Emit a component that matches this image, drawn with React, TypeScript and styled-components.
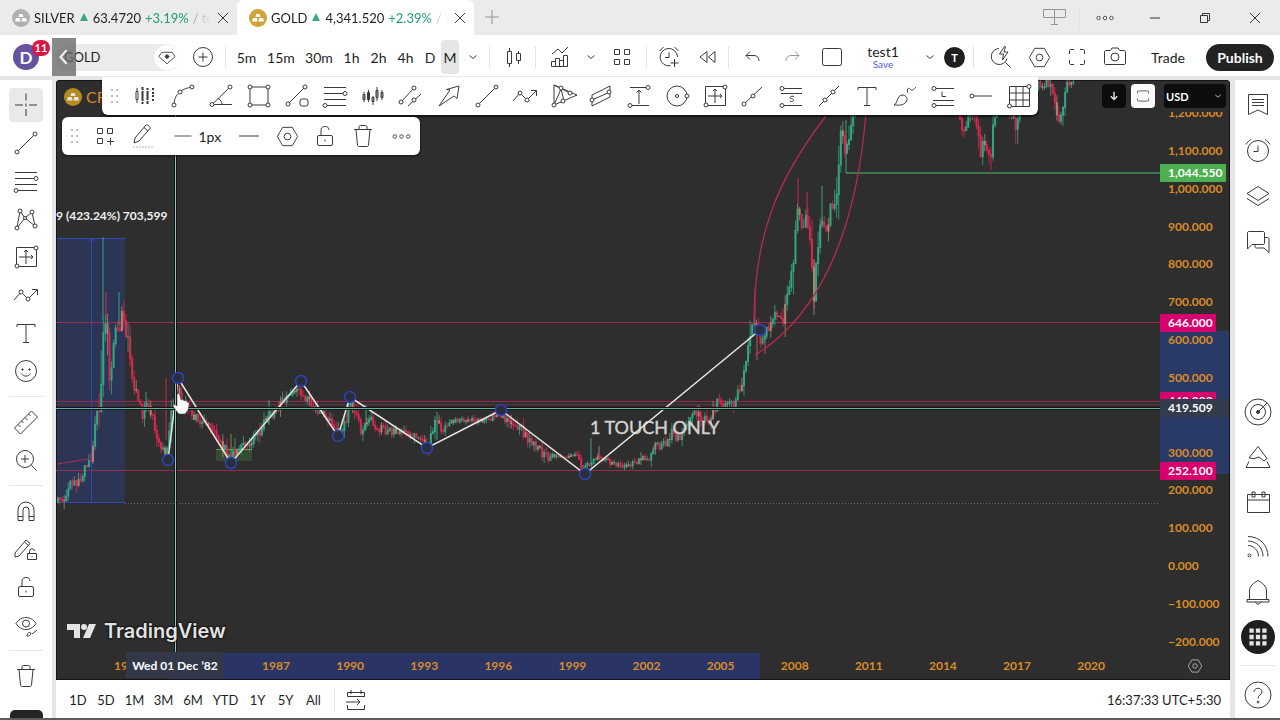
import React from "react";
import styled, { createGlobalStyle, css } from "styled-components";

const Global = createGlobalStyle`
  *, *::before, *::after { box-sizing: border-box; }
  body { margin: 0; background: #fff; color: #1f1f1f; font-family: Lato, "Noto Sans", sans-serif; font-size: 14px; }
  button, input, select { font: inherit; color: inherit; }
  button { background: none; border: 0; padding: 0; cursor: pointer; }
`;

/* ---------- layout ---------- */

const Page = styled.div`
  height: 100vh;
  display: flex;
  flex-direction: column;
  background: #e6e6e6;
  border-bottom: 2px solid #5c5c5c;
  overflow: hidden;
`;

const Workspace = styled.div`
  flex: 1;
  min-height: 0;
  display: grid;
  grid-template-columns: 52px minmax(0, 1fr) 45px;
  column-gap: 4px;
  margin-top: 4px;
`;

const Center = styled.main`
  position: relative;
  display: flex;
  flex-direction: column;
  min-height: 0;
`;

const Sep = styled.span<{ $gap?: number }>`
  flex: none;
  width: 1px;
  height: 22px;
  margin: 0 ${(p) => p.$gap ?? 2}px;
  background: #e4e4e4;
`;

const Cell = styled.button<{ $w: number; $active?: boolean; $dim?: boolean }>`
  flex: none;
  width: ${(p) => p.$w}px;
  height: 34px;
  display: flex;
  align-items: center;
  justify-content: center;
  border-radius: 4px;
  color: ${(p) => (p.$dim ? "#8a8a8a" : "#1f1f1f")};
  background: ${(p) => (p.$active ? "#e6e6e6" : "transparent")};
`;

const Glyph = styled.svg`
  flex: none;
  display: block;
  opacity: 0.88;
`;

/* ---------- title bar ---------- */

const TitleBar = styled.header`
  flex: none;
  height: 35px;
  display: flex;
  background: #ebebeb;
`;

const Tab = styled.div<{ $active?: boolean }>`
  width: 237px;
  display: flex;
  align-items: center;
  gap: 4px;
  padding: 0 6px 0 12px;
  border-radius: 6px 6px 0 0;
  white-space: nowrap;
  background: ${(p) => (p.$active ? "#fff" : "transparent")};
`;

const TabText = styled.div`
  flex: 1;
  min-width: 0;
  display: flex;
  gap: 4px;
  align-items: center;
  font-size: 13px;
  overflow: hidden;
  mask-image: linear-gradient(to right, #000 88%, transparent);
`;

const Up = styled.span`
  color: #1f9d76;
`;

const Faint = styled.span`
  color: #8f8f8f;
`;

const WindowControls = styled.div`
  margin-left: auto;
  display: flex;
  align-items: center;
`;

/* ---------- top toolbar ---------- */

const TopBar = styled.div`
  position: relative;
  flex: none;
  height: 41px;
  padding-top: 3px;
  display: flex;
  align-items: center;
  justify-content: space-between;
  background: #fff;
`;

const Group = styled.div`
  display: flex;
  align-items: center;
`;

const Avatar = styled.button`
  position: relative;
  width: 26px;
  height: 26px;
  margin: 0 16px 0 13px;
  border-radius: 50%;
  background: #6553a0;
  color: #fff;
  font-size: 17px;
  font-weight: 700;
`;

const Badge = styled.span`
  position: absolute;
  top: -4px;
  right: -11px;
  width: 18px;
  height: 16px;
  border-radius: 8px;
  background: #dc1440;
  font-size: 11px;
  line-height: 16px;
`;

const Search = styled.label`
  width: 125px;
  height: 27px;
  display: flex;
  align-items: center;
  padding-left: 9px;
  border-radius: 14px;
  background: #ebebeb;
  margin-right: 6px;
`;

const SearchInput = styled.input`
  flex: 1;
  min-width: 0;
  border: 0;
  padding: 0;
  outline: 0;
  background: none;
  font-size: 13px;
`;

const SearchMark = styled.span`
  width: 26px;
  height: 25px;
  display: flex;
  align-items: center;
  justify-content: center;
  border-radius: 50%;
  background: #fff;
`;

const BackHandle = styled.button`
  position: absolute;
  left: 52px;
  top: 3px;
  width: 24px;
  height: 38px;
  background: #6a6a6acc;
  color: #fff;
`;

const LayoutName = styled.button`
  width: 66px;
  display: flex;
  flex-direction: column;
  align-items: center;
  font-size: 14px;
  line-height: 15px;
`;

const Save = styled.span`
  color: #4c5ce0;
  font-size: 10px;
  line-height: 11px;
`;

const TeamMark = styled.button`
  width: 21px;
  height: 21px;
  border-radius: 50%;
  background: #1f1f1f;
  color: #fff;
  font-size: 11px;
  font-weight: 700;
`;

const Trade = styled.button`
  width: 68px;
  height: 28px;
  margin-right: 4px;
  border-radius: 14px;
  font-size: 14px;
`;

const Publish = styled.button`
  width: 68px;
  height: 27px;
  margin-right: 6px;
  border-radius: 14px;
  background: #232323;
  color: #fff;
  font-size: 14px;
  font-weight: 700;
`;

/* ---------- side bars ---------- */

const SideBar = styled.nav<{ $top: number }>`
  min-height: 0;
  padding-top: ${(p) => p.$top}px;
  display: flex;
  flex-direction: column;
  align-items: center;
  background: #fff;
  overflow: hidden;
`;

const SideButton = styled.button<{ $h: number }>`
  flex: none;
  width: 34px;
  height: ${(p) => p.$h}px;
  display: flex;
  align-items: center;
  justify-content: center;
`;

const Chosen = styled.span<{ $on?: boolean }>`
  display: flex;
  padding: 3px;
  border-radius: 4px;
  background: ${(p) => (p.$on ? "#e9e9e9" : "transparent")};
`;

const Rule = styled.hr`
  flex: none;
  width: 34px;
  height: 1px;
  margin: 6px 0;
  border: 0;
  background: #e6e6e6;
`;

const Fill = styled.div`
  flex: 1;
`;

const CornerButton = styled.button`
  flex: none;
  width: 33px;
  height: 34px;
  margin-top: 15px;
  border-radius: 5px;
  background: #232323;
  color: #fff;
`;

const AppsMark = styled.span`
  flex: none;
  width: 34px;
  height: 34px;
  display: grid;
  place-items: center;
  border-radius: 50%;
  background: #1f1f1f;
  color: #fff;
`;

/* ---------- chart ---------- */

const ChartFrame = styled.section`
  flex: 1;
  min-height: 0;
  position: relative;
  display: grid;
  grid-template-columns: minmax(0, 1fr) 70px;
  grid-template-rows: minmax(0, 1fr) 28px;
  margin-right: 1px;
  background: #2e2e2e;
  border-radius: 4px 4px 0 0;
  box-shadow: inset 0 0 0 1px #151515;
  overflow: hidden;
`;

const Canvas = styled.svg`
  display: block;
  width: 100%;
  height: 100%;
  min-height: 0;
  font-family: Lato, "Noto Sans", sans-serif;
`;

const AxisCorner = styled.button`
  display: grid;
  place-items: center;
  color: #fff;
`;

const ChartTitle = styled.div`
  position: absolute;
  left: 8px;
  top: 7px;
  display: flex;
  align-items: center;
  gap: 4px;
  color: #d98a2b;
  font-size: 16px;
`;

const AxisTools = styled.div`
  position: absolute;
  top: 4px;
  right: 4px;
  display: flex;
  gap: 5px;
`;

const AxisButton = styled.button<{ $light?: boolean }>`
  width: 24px;
  height: 24px;
  display: grid;
  place-items: center;
  border-radius: 4px;
  background: ${(p) => (p.$light ? "#fafafa" : "#0c0c0c")};
  color: ${(p) => (p.$light ? "#222" : "#fff")};
`;

const CurrencyBox = styled.div`
  position: relative;
  width: 62px;
  height: 24px;
  margin-left: 4px;
  color: #fff;
`;

const Currency = styled.select`
  width: 100%;
  height: 100%;
  appearance: none;
  border: 0;
  border-radius: 3px;
  padding: 0 2px;
  background: #0c0c0c;
  font-size: 11px;
  font-weight: 700;
`;

const CurrencyArrow = styled.span`
  position: absolute;
  right: -3px;
  top: 1px;
  display: flex;
  pointer-events: none;
`;

const Watermark = styled.div`
  position: absolute;
  left: 11px;
  bottom: 36px;
  display: flex;
  align-items: center;
  gap: 7px;
  color: #e4e4e4;
  font-family: Inter, sans-serif;
  font-size: 20px;
  font-weight: 600;
  line-height: 26px;
  text-shadow: 0 0 2px #000, 0 0 2px #000;
`;

const floating = css`
  position: absolute;
  display: flex;
  align-items: center;
  background: #fff;
`;

const DrawingBar = styled.div`
  ${floating}
  left: 46px;
  top: -3px;
  height: 38px;
  border-radius: 0 0 6px 6px;
  box-shadow: 0 2px 2px #0009;
`;

const StyleBar = styled.div`
  ${floating}
  left: 6px;
  top: 37px;
  height: 38px;
  border-radius: 6px;
  box-shadow: 0 1px 3px #0009;
`;

const Handle = styled.span`
  width: 24px;
  display: flex;
  justify-content: center;
  color: #b5b5b5;
`;

/* ---------- bottom bar ---------- */

const BottomBar = styled.footer`
  flex: none;
  height: 38px;
  margin-right: 1px;
  padding: 2px 9px 0 8px;
  display: flex;
  align-items: center;
  background: #fff;
  font-size: 13px;
`;

const Clock = styled.button`
  margin-left: auto;
  font-size: 13px;
`;

/* ---------- icons ---------- */

const dot = (x: number, y: number, r = 2) => <circle key={`${x}-${y}`} cx={x} cy={y} r={r} fill="#fff" />;

const icons: Record<string, React.ReactNode> = {
  cross: <path d="M14 2.500v7M14 18v7M3 14h8M17 14h8M14 12.500v3" />,
  trend: <><path d="M5 23 23 5" />{dot(5, 23)}{dot(23, 5)}</>,
  fib: <><path d="M3 5.500h22M3 11.500h20M3 17.500h22M5 23.500h20" />{dot(24, 11.5)}{dot(4, 23.5)}</>,
  pattern: <><path d="M5 23 8 6l5 7 7-6 3 14-10-8-8 10" />{dot(8, 6)}{dot(20, 7)}{dot(5, 23)}{dot(23, 21)}{dot(13, 13, 1.5)}</>,
  measureBox: <><path d="M4.500 4.500h20v19h-20zM7 14h14M14 21V7M12 9l2-2 2 2M19 12l2 2-2 2" />{dot(24, 5)}{dot(5, 23)}</>,
  wave: <><path d="m2 19 7-8 7 7L25 9M20 8.500h5.500V14" />{dot(9, 11)}{dot(16, 18)}</>,
  text: <path d="M5 8V5.500h18V8M14 5.500v18M11 23.500h6" />,
  smile: <><circle cx="14" cy="14" r="10.500" /><path d="M9.500 16.500c2 3.500 7 3.500 9 0" /><circle cx="10.500" cy="12.500" r=".7" fill="currentColor" /><circle cx="17.500" cy="12.500" r=".7" fill="currentColor" /></>,
  ruler: <path d="m2.500 20 17-17 6 6-17 17zM6 16.500l2.500 2.500M9.500 13l2 2M13 9.500l2.500 2.500M16.500 6l2 2" />,
  zoom: <><circle cx="13" cy="13" r="8.500" /><path d="m19.500 19.500 5 5M13 9v8M9 13h8" /></>,
  magnet: <path d="M6 23.500V13a8 8 0 0 1 16 0v10.500h-5V13a3 3 0 0 0-6 0v10.500zM6 19.500h5M17 19.500h5" />,
  pencilLock: <><path d="m3 18 11-13 4 3.500L7 21l-4 1zM12.500 7l4 3.500" /><path d="M15.500 18.500h9v6h-9zM17.500 18.500v-2a2.500 2.500 0 0 1 5-.5M20 21v1" /></>,
  lock: <><rect x="6.500" y="13.500" width="15" height="10" rx="1.500" /><path d="M10 13.500V9a4 4 0 0 1 8-1M14 17.500v2" /></>,
  eye: <><path d="M4 12.500c5-8 15-8 20 0-5 8-15 8-20 0z" /><circle cx="14" cy="12.500" r="3.500" /><path d="m20 23 5-4M15 25c0-3 2-4 4-3 0 2-2 3.500-4 3z" /></>,
  trash: <path d="M5 7.500h18M10 7.500V5c0-1 .5-1.500 1.500-1.500h5c1 0 1.500.5 1.500 1.500v2.500M7 7.500l1.500 15.500c.2 1 .7 1.500 1.700 1.500h7.600c1 0 1.500-.5 1.700-1.500L21 7.500" />,
  // drawing tools
  projection: <><path d="M6 6v3M5 9.500h2v8H5zM6 18v3" /><path d="M11.500 5v3M11.500 9v10M11.500 20v2M16.500 6v2M16.500 9v9M16.500 19v3M22 6v2M22 10v2M22 13v2M22 17v2" strokeWidth="2" /></>,
  arc: <><path d="M5 23c0-6 2-10 6-13M11 10c3-3 7-4 12-5" />{dot(5, 23)}{dot(11, 10)}{dot(23, 5)}</>,
  angle: <><path d="M23 5 5 22.500h20M11 16.500c3 1.500 4 3.500 4 6" />{dot(23, 5)}{dot(5, 22.5)}</>,
  rect: <><path d="M5 5h18v18H5z" />{dot(5, 5)}{dot(23, 5)}{dot(5, 23)}{dot(23, 23)}</>,
  lineBox: <><path d="M5 22 22 5" /><rect x="17" y="17" width="8" height="7" rx="2" />{dot(5, 22)}{dot(22, 5)}</>,
  bars: <><path d="M5 10v10M9.500 8v12M14 14v9M18 5v14M23 8v10" /><path d="M4 12.500h2v5H4zM8.500 10.500h2v7h-2zM13 15.500h2v4h-2zM17 8.500h2v7h-2zM22 10.500h2v5h-2z" /></>,
  channel: <><path d="M4 20 17 6M11 24 24 12" />{dot(4, 20)}{dot(17, 6)}{dot(17, 18)}</>,
  arrow: <path d="m4 24 11-16-3.500-.5L24 4l-2 12.500-3-2.500z" />,
  triangle: <><path d="M5 3v20l23-10zM5 23 12 7l3 12M5 3l16 8" />{dot(5, 23)}{dot(12, 6)}{dot(14, 19)}{dot(21, 11)}</>,
  parallel: <><path d="m5 13 18-9v11L5 24zM5 18l18-8" />{dot(5, 18)}{dot(22, 10)}</>,
  range: <><path d="M5 5.500h17M6 23.500h18M14 22V8M11.500 10.500 14 8l2.500 2.500" />{dot(23, 5.5)}{dot(5, 23.5)}</>,
  circle: <><circle cx="14" cy="14" r="10" />{dot(14, 14, 1.5)}{dot(24, 14)}</>,
  ray: <><path d="M5 22 23 5" />{dot(5, 22)}{dot(14, 14)}</>,
  short: <><path d="M5 6.500h20M4 11.500h21M5 23.500h20M17 14.500c-4-1.500-5 2-2.500 2.300 3.500.4 2.500 4-1.500 2.400" />{dot(5, 6.5)}{dot(5, 23.5)}</>,
  extended: <><path d="M4 24 24 4" />{dot(10, 18)}{dot(18, 10)}</>,
  brush: <path d="M3 23c4-1 2-10 9-10 5 1 5 6 2 8-3 3-8 2-11 2zM17 11c-2-5 1-6 3-3 2 1 3-1 5-3" />,
  long: <><path d="M5 6.500h20M4 18.500h21M5 23.500h20M13 9.500v5h4" />{dot(5, 6.5)}{dot(5, 23.5)}</>,
  hray: <><path d="M5 14h20" />{dot(5, 14)}</>,
  grid: <><path d="M4.500 4.500h20v20h-20zM4.500 11h20M4.500 18h20M11 4.500v20M18 4.500v20" />{dot(24, 4.5)}{dot(4.5, 24)}</>,
  // style bar
  template: <path d="M6.500 6.500h5v5h-5zM16.500 6.500h5v5h-5zM6.500 16.500h5v5h-5zM19.500 16v7M16 19.500h7" />,
  pencil: <><path d="m6 16 11-13c1-1 5 2 4 3.500L10 19l-5 2zM15 5.500l4 3.500" /><path d="M4 25h20" strokeDasharray="2 1" stroke="#aaa" /></>,
  hexagon: <><path d="M9 4.500h10l5.500 9.500L19 23.500H9L3.500 14z" /><circle cx="14" cy="14" r="3.500" /></>,
  hline: <path d="M4 14h20" />,
  more: <>{dot(6.5, 14)}{dot(14, 14)}{dot(21.5, 14)}</>,
  dots: <path d="M11 8h2M16 8h2M11 14h2M16 14h2M11 20h2M16 20h2" strokeWidth="2" />,
  // top bar
  diamond: <><path d="M8 8.500h12l3.500 5L14 22l-9.500-8.500z" /><path d="m14 11 2.500 2.500L14 16l-2.500-2.500z" fill="currentColor" /></>,
  plusCircle: <><circle cx="14" cy="14" r="9.500" /><path d="M14 9.500v9M9.500 14h9" /></>,
  plus: <path d="M14 7v14M7 14h14" />,
  chevron: <path d="m10.500 12.500 3.500 3 3.500-3" />,
  left: <path d="m17 6-7 8 7 8" strokeWidth="2.500" />,
  candles: <path d="M7.500 8.500h4v12h-4zM9.500 5v3.500M9.500 20.500V24M16.500 10.500h4v7h-4zM18.500 8v2.500M18.500 17.500V21" />,
  indicators: <path d="m6 11 6-5 4 4 6-6M5.500 18.500h4v5h-4zM9.500 15.500h4v8h-4zM13.500 17.500h4v6h-4zM17.500 12.500h4v11h-4z" />,
  layouts: <path d="M6.500 6.500h5v5h-5zM16.500 6.500h5v5h-5zM6.500 16.500h5v5h-5zM16.500 16.500h5v5h-5z" />,
  alert: <path d="M22.500 14a8.700 8.700 0 1 0-7 8.700M14 9.500V14.500h-4M19.500 16v8M15.500 20h8M4.500 8l4-4M23.500 8l-4-4" />,
  replay: <path d="M13 8.500v11L6 14zM21 8.500v11L14.500 14z" />,
  undo: <path d="m11 8.500-4 4 4 4M7 12.500h8c3 0 5 2 5 5.500" />,
  redo: <path d="m17 8.500 4 4-4 4M21 12.500h-8c-3 0-5 2-5 5.500" />,
  frame: <rect x="4.500" y="5.500" width="19" height="17" rx="2" />,
  quick: <path d="M12 5.500a8 8 0 1 0 8 10M18.500 19.500l5 5M17.500 3.500l-5 7.500h4l-1 6 5.500-8h-4l1.500-5.500z" />,
  full: <path d="M6.500 11V8c0-1 .5-1.500 1.500-1.500h3M17 6.500h3c1 0 1.500.5 1.500 1.500v3M21.500 17v3c0 1-.5 1.500-1.500 1.500h-3M11 21.500H8c-1 0-1.500-.5-1.500-1.500v-3" />,
  camera: <><path d="M5 7.500h4.500L11 5h6l1.500 2.500H23c1 0 1.500.5 1.500 1.500v11c0 1-.5 1.500-1.500 1.500H5c-1 0-1.500-.5-1.500-1.500V9c0-1 .5-1.500 1.500-1.500z" /><circle cx="14" cy="14" r="4" /></>,
  monitor: <path d="M3.500 5.500h22v8h-22zM14.500 5.500v15M11 20.500h7" />,
  minimise: <path d="M9 14h10" />,
  restore: <path d="M9.500 11.500h7v7h-7zM11.500 11.500v-2h7v7h-2" />,
  close: <path d="m9 9 10 10M19 9 9 19" />,
  // right bar
  list: <path d="M4.500 4.500h19v20L14 20l-9.500 4.500zM8 9.500h12M8 12.500h12M8 15.500h12" />,
  clock: <><circle cx="14" cy="15" r="10.500" /><path d="M14 9.500v6H9.500M2 8.500c1-2 3-4 5-5M26 8.500c-1-2-3-4-5-5" /></>,
  layers: <path d="m14 4.500 11 7-11 7-11-7zM3 16.500l11 7 11-7" />,
  chat: <path d="M5 3.500h14c1 0 1.500.5 1.500 1.500v10c0 1-.5 1.500-1.500 1.500H8L3.500 21V5c0-1 .5-1.500 1.500-1.500zM11 16.500v2c0 1 .5 1.500 1.500 1.500H20l5 4.500V11c0-1-.5-1.500-1.500-1.500h-3" />,
  target: <><circle cx="14" cy="14" r="13" /><circle cx="14" cy="14" r="7.500" /><circle cx="14" cy="14" r="1.500" fill="currentColor" /><path d="m14 14 9-9" /></>,
  pyramid: <path d="m14 3.500 9 12-3 2.500-5-4-5 1.500-5-.5zM5 18.500l-3 6h24l-3-6" />,
  calendar: <path d="M3.500 6.500h22v18h-22zM3.500 12h22M8 4h3v5H8zM18 4h3v5h-3z" />,
  feed: <><path d="M4 12.500c6 0 10.500 5 10.500 11M4 8c9 0 15 7 15 15.500M4 3.500c12 0 20 9 20 20" /><circle cx="5.500" cy="22.500" r="1.500" /></>,
  bell: <path d="M3 21.500h22v2.500H3zM5.500 21.500V13c0-5 4-8 8.500-10.500 4.500 2.500 8.500 5.500 8.500 10.500v8.500M11 24l3 2.500 3-2.500" />,
  apps: <path d="M6 6h4v4H6zM12 6h4v4h-4zM18 6h4v4h-4zM6 12h4v4H6zM12 12h4v4h-4zM18 12h4v4h-4zM6 18h4v4H6zM12 18h4v4h-4zM18 18h4v4h-4z" fill="currentColor" stroke="none" />,
  help: <><circle cx="14" cy="14" r="13" /><path d="M10 11c0-5 8-5 8 0 0 3-4 3-4 6.500" /><circle cx="14" cy="21" r="1" /></>,
  down: <path d="M14 8v11M9.500 14.500 14 19l4.500-4.500" strokeWidth="2" />,
  auto: <path d="M7 11V9c0-1 .5-1.500 1.500-1.500h11c1 0 1.500.5 1.500 1.500v2M7 17v2c0 1 .5 1.500 1.500 1.500h11c1 0 1.500-.5 1.500-1.500v-2" />,
  goto: <path d="M22.500 11V6.500h-17v4M5.500 19v4.500h17V19M9 4v4M19 4v4M5.500 10.500h17M4 16h14M15 13l3 3-3 3" />,
};

const Icon = ({ name, size = 28 }: { name: string; size?: number }) => (
  <Glyph width={size} height={size} viewBox="0 0 28 28" fill="none" stroke="currentColor" strokeWidth="1" aria-hidden="true">
    {icons[name]}
  </Glyph>
);

const Coin = ({ tone }: { tone: string }) => (
  <Glyph width="18" height="18" viewBox="0 0 18 18" aria-hidden="true">
    <circle cx="9" cy="9" r="9" fill={tone} />
    <path d="m6.500 8 .8-3h3.400l.8 3zM3 12.500l1-3.500h3.800l.8 3.500zM9.400 12.500l.8-3.500H14l1 3.500z" fill="#fff" />
  </Glyph>
);

/* ---------- chart data ---------- */

type Pt = [number, number];

const pathA: Pt[] = [
  [58, 502], [63, 498], [71, 479], [77, 487], [83, 473], [88, 462], [92, 450], [95, 422], [99, 410], [102, 372], [104, 312],
  [107, 330], [110, 385], [113, 345], [116, 322], [119, 328], [122, 310], [125, 320], [129, 352], [131, 378], [135, 390],
  [140, 408], [143, 415], [147, 402], [151, 410], [155, 430], [160, 445], [166, 452], [169, 425], [172, 408], [176, 384],
  [181, 398], [190, 412], [200, 422], [210, 424], [221, 443], [231, 458], [238, 446], [250, 442], [258, 434], [265, 416],
  [273, 415], [282, 400], [290, 394], [299, 384], [304, 398], [308, 396], [316, 408], [325, 418], [333, 424], [338, 430],
  [345, 422], [350, 404], [355, 414], [361, 430], [368, 418], [376, 426], [386, 430], [400, 431], [411, 434], [421, 441],
  [428, 446], [433, 426], [438, 414], [443, 432], [450, 420], [470, 420], [483, 421], [500, 414], [512, 421], [522, 430],
  [530, 440], [540, 450], [548, 457], [562, 455], [576, 456], [584, 470], [590, 462], [595, 458], [606, 460], [626, 467],
  [640, 460], [650, 456], [655, 446], [666, 444], [672, 431], [679, 438], [690, 420], [697, 410], [702, 420], [710, 419],
  [717, 402], [725, 403], [735, 404], [740, 388], [745, 362], [749, 348], [752, 322], [758, 330], [761, 342], [766, 333],
  [772, 320], [778, 312], [784, 319], [788, 288], [793, 262], [796, 218], [798, 200], [803, 232], [806, 220], [811, 250],
  [814, 290], [817, 255], [821, 218], [827, 232], [830, 205], [835, 205], [839, 165], [841, 120], [845, 155], [849, 138], [853, 112], [858, 90],
];
const pathB: Pt[] = [
  [958, 105], [963, 130], [967, 122], [972, 112], [977, 128], [981, 154], [985, 138], [991, 165], [994, 118], [998, 95],
  [1012, 112], [1016, 130], [1020, 90], [1050, 82], [1054, 104], [1059, 118], [1063, 103], [1067, 84], [1074, 86],
];

/** Longer wicks: x, top, bottom, colour */
const spikes: [number, number, number, string][] = [
  [103, 237, 320, "#35a583"], [106, 292, 320, "#d8284f"], [119, 292, 325, "#35a583"], [166, 378, 440, "#d8284f"],
  [591, 438, 464, "#35a583"], [599, 446, 460, "#8b8b7a"], [755, 290, 330, "#d8284f"], [765, 330, 354, "#b45a5a"],
  [757, 332, 360, "#b45a5a"], [798, 178, 210, "#d8284f"], [822, 186, 225, "#35a583"], [814, 260, 308, "#d8284f"],
  [807, 192, 225, "#d8284f"], [846, 120, 173, "#35a583"], [231, 434, 462, "#7d8f55"], [235, 438, 458, "#4c8f55"],
  [437, 412, 440, "#35a583"], [366, 405, 430, "#35a583"], [146, 392, 412, "#35a583"], [269, 400, 425, "#35a583"],
];

const makeCandles = (pts: Pt[], seed: number) => {
  let s = seed;
  const rnd = () => ((s = (s * 16807) % 2147483647) / 2147483647);
  const yAt = (x: number) => {
    const i = Math.max(1, pts.findIndex((p) => p[0] >= x));
    const [a, b] = [pts[i - 1], pts[i]];
    return a[1] + ((b[1] - a[1]) * (x - a[0])) / (b[0] - a[0]);
  };
  const end = pts[pts.length - 1][0];
  const out: { x: number; o: number; c: number; h: number; l: number }[] = [];
  let prev = pts[0][1];
  for (let x = pts[0][0]; x < end; x += 2.06) {
    const slope = Math.abs(yAt(Math.min(x + 2, end)) - yAt(x));
    const calm = (x > 445 && x < 500) || (x > 550 && x < 640) ? 0.6 : 1;
    const c = yAt(x) + (rnd() - 0.5) * (8 * calm + slope * 0.6);
    const wick = 6 * calm + slope * 0.6;
    out.push({ x, o: prev, c, h: Math.min(prev, c) - rnd() * wick, l: Math.max(prev, c) + rnd() * wick });
    prev = c;
  }
  return out;
};
const candles = [...makeCandles(pathA, 77), ...makeCandles(pathB, 19)];

const anchors: Pt[] = [
  [168, 460], [178, 378], [231, 463], [301, 381], [338, 436], [350, 397], [427, 448], [501, 410], [585, 474], [760, 330],
];

const Plot = () => (
  <Canvas viewBox="56 80 1104 572" preserveAspectRatio="xMinYMin slice" role="img" aria-label="Gold monthly price chart">
    <rect x="57" y="238" width="68" height="265" fill="#2d3c78" fillOpacity=".52" />
    <path d="M57 238.500H125M57 502.500H125M91.500 238V503M88 242l3.500-3 3.500 3" stroke="#3048b8" fill="none" />
    <path d="M125 503.500H1160" stroke="#6b6b6b" strokeDasharray="1 2" />
    <path d="M56 322.500H1160M56 401.500H1160M56 470.500H1160" stroke="#9c2a50" />
    <path d="M56 404.500H1160" stroke="#6a2a40" />
    <path d="M846 173H1160" stroke="#3f7348" strokeWidth="2" />
    <path d="M57 464 88 459" stroke="#b52a50" />
    <rect x="216" y="449" width="36" height="12" fill="#3f7a3c" fillOpacity=".4" />
    <path d="M216 449.500h36" stroke="#6f9a58" />
    {spikes.map(([x, t, b, c]) => (
      <path key={`${x}-${t}`} d={`M${x} ${t}V${b}`} stroke={c} />
    ))}
    {candles.map((k, i) => {
      const tone = k.c <= k.o ? "#35a583" : "#d8284f";
      return (
        <g key={i} stroke={i % 7 === 3 ? "#a98672" : tone}>
          <path d={`M${k.x} ${k.h}V${k.l}`} strokeOpacity=".8" />
          <path d={`M${k.x} ${Math.min(k.o, k.c)}V${Math.max(k.o, k.c) + 1}`} strokeWidth="2" />
        </g>
      );
    })}
    <path d="M754 322C754 235 778 178 826 116M755 355C815 318 856 240 866 112" fill="none" stroke="#b32b50" strokeWidth="1.300" />
    <text x="590" y="434" fontSize="18" fill="#d2d2d2" stroke="#d2d2d2" strokeWidth=".4">1 TOUCH ONLY</text>
    <text x="56" y="220" fontSize="12" fontWeight="700" fill="#f0f0f0">9 (423.24%) 703,599</text>
    <path d={`M${anchors.map((p) => p.join(" ")).join("L")}`} fill="none" stroke="#e8e8e0" strokeWidth="1.500" />
    <path d="M56 408.500H1160" stroke="#151515" strokeWidth="3" />
    <path d="M56 408.500H1160" stroke="#5cb8a0" />
    <path d="M175.500 80V652" stroke="#151515" strokeWidth="3" />
    <path d="M175.500 80V652" stroke="#8fc4c4" />
    {anchors.map(([x, y]) => (
      <circle key={x} cx={x} cy={y} r="5.500" fill="#2a2d3c" stroke="#2c45b4" strokeWidth="1.500" />
    ))}
    <path d="M177 394c2-1 3 0 3 2l1 4c2-1 3 0 3 1 2-1 3 0 3 1 2 0 2 1 2 3l-1 5-3 4h-6c-2-2-4-5-6-8 1-2 3-1 4 0z" fill="#fff" stroke="#333" strokeWidth=".5" />
  </Canvas>
);

const prices: [string, number][] = [
  ["1,200.000", 113], ["1,100.000", 151], ["1,000.000", 189], ["900.000", 227], ["800.000", 264], ["700.000", 302],
  ["600.000", 340], ["500.000", 378], ["300.000", 453], ["200.000", 490], ["100.000", 528], ["0.000", 566],
  ["−100.000", 604], ["−200.000", 642],
];
const priceTags: [string, number, number, string][] = [
  ["1,044.550", 173, 66, "#4caf50"], ["646.000", 323, 56, "#d8006c"], ["440.000", 401, 56, "#d8006c"],
  ["419.509", 408, 69, "#343b4c"], ["252.100", 471, 56, "#d8006c"],
];

const PriceAxis = () => (
  <Canvas viewBox="1160 80 70 572" preserveAspectRatio="xMinYMin slice" fontSize="12" fontWeight="700">
    <rect x="1160" y="331" width="69" height="143" fill="#293a66" />
    {prices.map(([label, y]) => (
      <text key={label} x="1168" y={y + 4} fill="#d98c26">{label}</text>
    ))}
    <rect x="1160" y="81" width="69" height="31" fill="#2e2e2e" />
    {priceTags.map(([label, y, w, fill]) => (
      <g key={label}>
        <rect x="1160" y={y - 9} width={w} height="18" rx="1" fill={fill} />
        <text x="1168" y={y + 4} fill="#fff">{label}</text>
      </g>
    ))}
  </Canvas>
);

const years = [1987, 1990, 1993, 1996, 1999, 2002, 2005, 2008, 2011, 2014, 2017, 2020];

const TimeAxis = () => (
  <Canvas viewBox="56 652 1104 28" preserveAspectRatio="xMinYMin slice" fontSize="12" fontWeight="700">
    <rect x="170" y="653" width="590" height="26" fill="#2a3566" />
    <text x="114" y="670" fill="#d98c26">19</text>
    {years.map((year, i) => (
      <text key={year} x={276 + i * 74.1} y="670" textAnchor="middle" fill="#d98c26">{year}</text>
    ))}
    <rect x="126" y="652" width="97" height="26" fill="#323848" />
    <text x="175" y="670" textAnchor="middle" fill="#fff">Wed 01 Dec ’82</text>
  </Canvas>
);

/* ---------- parts ---------- */

type QuoteProps = { name: string; price: string; change: string; rest: string; tone: string; active?: boolean };

const Quote = ({ name, price, change, rest, tone, active }: QuoteProps) => (
  <Tab $active={active}>
    <Coin tone={tone} />
    <TabText>
      <span>{name}</span>
      <Glyph width="10" height="9" viewBox="0 0 10 9" aria-hidden="true"><path d="M5 0 9 8H1z" fill="#1f9d76" /></Glyph>
      <span>{price}</span>
      <Up>{change}</Up>
      <Faint>{rest}</Faint>
    </TabText>
    <Cell $w={16} aria-label={`Close ${name}`}><Icon name="close" /></Cell>
  </Tab>
);

const intervals: [string, number][] = [["5m", 31], ["15m", 38], ["30m", 38], ["1h", 27], ["2h", 27], ["4h", 27], ["D", 22], ["M", 18]];
const drawTools = [
  "projection", "arc", "angle", "rect", "lineBox", "fib", "bars", "channel", "arrow", "trend", "wave", "triangle",
  "parallel", "range", "circle", "measureBox", "ray", "short", "extended", "text", "brush", "long", "hray", "grid",
];
const ranges: [string, number][] = [["1D", 28], ["5D", 28], ["1M", 29], ["3M", 29], ["6M", 30], ["YTD", 35], ["1Y", 29], ["5Y", 27], ["All", 29]];
const leftTools = [
  ["cross", "trend", "fib", "pattern", "measureBox", "wave", "text", "smile"],
  ["ruler", "zoom"],
  ["magnet", "pencilLock", "lock", "eye"],
  ["trash"],
];

const App = () => (
  <>
    <Global />
    <Page>
      <TitleBar>
        <Quote name="SILVER" price="63.4720" change="+3.19%" rest="/ te" tone="#a9a9ad" />
        <Quote name="GOLD" price="4,341.520" change="+2.39%" rest="/ t" tone="#c9981c" active />
        <Cell $w={36} $dim aria-label="New tab"><Icon name="plus" /></Cell>
        <WindowControls>
          <Cell $w={50} $dim aria-label="Layout panel"><Icon name="monitor" /></Cell>
          <Sep $gap={0} />
          <Cell $w={50} aria-label="More"><Icon name="more" size={24} /></Cell>
          <Cell $w={50} aria-label="Minimise"><Icon name="minimise" /></Cell>
          <Cell $w={50} aria-label="Restore"><Icon name="restore" /></Cell>
          <Cell $w={50} aria-label="Close window"><Icon name="close" /></Cell>
        </WindowControls>
      </TitleBar>

      <TopBar>
        <Group>
          <Avatar aria-label="Profile">D<Badge>11</Badge></Avatar>
          <Search>
            <SearchInput aria-label="Symbol" defaultValue="GOLD" />
            <SearchMark><Icon name="diamond" size={24} /></SearchMark>
          </Search>
          <Cell $w={34} aria-label="Compare"><Icon name="plusCircle" /></Cell>
          <Sep $gap={5} />
          {intervals.map(([label, w]) => (
            <Cell key={label} $w={w} $active={label === "M"}>{label}</Cell>
          ))}
          <Cell $w={28} aria-label="Intervals"><Icon name="chevron" /></Cell>
          <Sep />
          <Cell $w={43} aria-label="Candles"><Icon name="candles" /></Cell>
          <Sep $gap={0} />
          <Cell $w={48} aria-label="Indicators"><Icon name="indicators" /></Cell>
          <Cell $w={14} aria-label="Favourites"><Icon name="chevron" /></Cell>
          <Cell $w={48} aria-label="Templates"><Icon name="layouts" /></Cell>
          <Sep $gap={0} />
          <Cell $w={43} aria-label="Alert"><Icon name="alert" /></Cell>
          <Cell $w={36} aria-label="Replay"><Icon name="replay" /></Cell>
          <Sep />
          <Cell $w={44} aria-label="Undo"><Icon name="undo" /></Cell>
          <Cell $w={34} $dim aria-label="Redo"><Icon name="redo" /></Cell>
        </Group>
        <Group>
          <Cell $w={36} aria-label="Layout"><Icon name="frame" /></Cell>
          <LayoutName>test1<Save>Save</Save></LayoutName>
          <Cell $w={28} aria-label="Layouts"><Icon name="chevron" /></Cell>
          <TeamMark>T</TeamMark>
          <Sep $gap={8} />
          <Cell $w={38} aria-label="Quick search"><Icon name="quick" /></Cell>
          <Cell $w={38} aria-label="Settings"><Icon name="hexagon" size={27} /></Cell>
          <Cell $w={38} aria-label="Fullscreen"><Icon name="full" /></Cell>
          <Cell $w={38} aria-label="Snapshot"><Icon name="camera" /></Cell>
          <Trade>Trade</Trade>
          <Publish>Publish</Publish>
        </Group>
        <BackHandle aria-label="Scroll back"><Icon name="left" size={24} /></BackHandle>
      </TopBar>

      <Workspace>
        <SideBar $top={6}>
          {leftTools.map((group, g) => (
            <React.Fragment key={group[0]}>
              {g > 0 && <Rule />}
              {group.map((name) => (
                <SideButton key={name} $h={38} aria-label={name}>
                  <Chosen $on={name === "cross"}><Icon name={name} /></Chosen>
                </SideButton>
              ))}
            </React.Fragment>
          ))}
          <CornerButton aria-label="Panel"><Icon name="plus" size={20} /></CornerButton>
        </SideBar>

        <Center>
          <ChartFrame>
            <Plot />
            <PriceAxis />
            <TimeAxis />
            <AxisCorner aria-label="Axis settings"><Icon name="hexagon" size={18} /></AxisCorner>
            <ChartTitle><Coin tone="#c9981c" />CFD</ChartTitle>
            <AxisTools>
              <AxisButton aria-label="Scroll down"><Icon name="down" size={20} /></AxisButton>
              <AxisButton $light aria-label="Auto scale"><Icon name="auto" size={22} /></AxisButton>
              <CurrencyBox>
                <Currency aria-label="Currency" defaultValue="USD"><option>USD</option></Currency>
                <CurrencyArrow><Icon name="chevron" size={22} /></CurrencyArrow>
              </CurrencyBox>
            </AxisTools>
            <Watermark>
              <svg width="30" height="18" viewBox="0 0 30 18" fill="currentColor" aria-hidden="true">
                <path d="M0 2h13v14H7V8H0z" /><circle cx="17" cy="5" r="3" /><path d="M22 2h7l-6 14h-7z" />
              </svg>
              TradingView
            </Watermark>
          </ChartFrame>

          <BottomBar>
            {ranges.map(([label, w]) => (
              <Cell key={label} $w={w}>{label}</Cell>
            ))}
            <Sep $gap={6} />
            <Cell $w={30} aria-label="Go to date"><Icon name="goto" /></Cell>
            <Clock>16:37:33 UTC+5:30</Clock>
          </BottomBar>

          <DrawingBar>
            <Handle><Icon name="dots" /></Handle>
            {drawTools.map((name) => (
              <Cell key={name} $w={38} aria-label={name}><Icon name={name} /></Cell>
            ))}
          </DrawingBar>
          <StyleBar>
            <Handle><Icon name="dots" /></Handle>
            <Cell $w={38} aria-label="Template"><Icon name="template" /></Cell>
            <Cell $w={38} aria-label="Line colour"><Icon name="pencil" /></Cell>
            <Cell $w={68} aria-label="Line width"><Icon name="hline" size={24} />&nbsp;1px</Cell>
            <Cell $w={38} aria-label="Line style"><Icon name="hline" /></Cell>
            <Cell $w={38} aria-label="Settings"><Icon name="hexagon" size={27} /></Cell>
            <Cell $w={38} aria-label="Lock"><Icon name="lock" /></Cell>
            <Cell $w={38} aria-label="Remove"><Icon name="trash" /></Cell>
            <Cell $w={38} aria-label="More"><Icon name="more" size={25} /></Cell>
          </StyleBar>
        </Center>

        <SideBar $top={1} as="aside">
          {["list", "clock", "layers", "chat"].map((name) => (
            <SideButton key={name} $h={46} aria-label={name}><Icon name={name} /></SideButton>
          ))}
          <Fill />
          {["target", "pyramid", "calendar", "feed", "bell"].map((name) => (
            <SideButton key={name} $h={45} aria-label={name}><Icon name={name} /></SideButton>
          ))}
          <SideButton $h={45} aria-label="Products"><AppsMark><Icon name="apps" size={30} /></AppsMark></SideButton>
          <Rule />
          <SideButton $h={46} aria-label="Help"><Icon name="help" /></SideButton>
        </SideBar>
      </Workspace>
    </Page>
  </>
);

export default App;
